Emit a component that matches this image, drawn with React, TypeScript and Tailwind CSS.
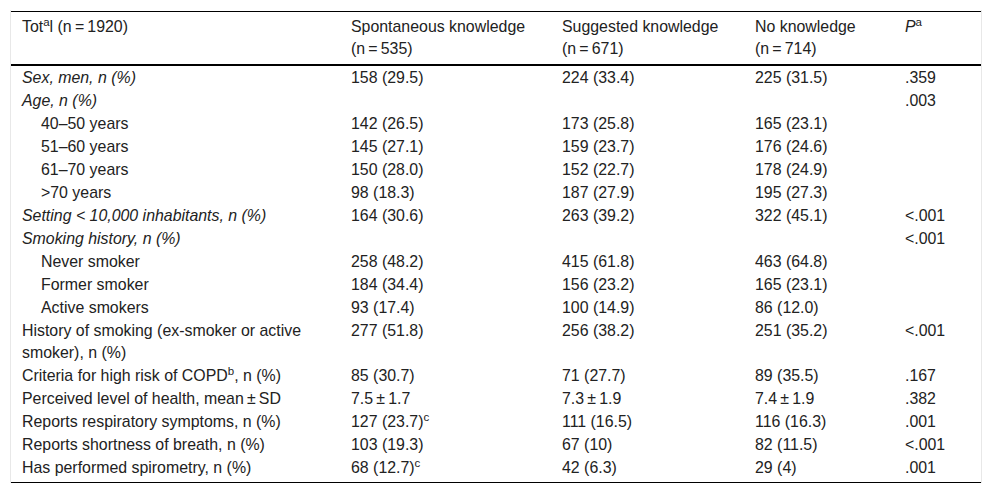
import React from "react";

type Row = {
  label: React.ReactNode;
  values: React.ReactNode[];
  p?: string;
  italic?: boolean;
  indent?: boolean;
};

const sup = (s: string) => (
  <sup className="text-[11.5px] leading-none relative top-[0.5px] align-super">{s}</sup>
);

const T = "\u2009";

const rows: Row[] = [
  { label: "Sex, men, n (%)", italic: true, values: ["158 (29.5)", "224 (33.4)", "225 (31.5)"], p: ".359" },
  { label: "Age, n (%)", italic: true, values: ["", "", ""], p: ".003" },
  { label: "40–50 years", indent: true, values: ["142 (26.5)", "173 (25.8)", "165 (23.1)"] },
  { label: "51–60 years", indent: true, values: ["145 (27.1)", "159 (23.7)", "176 (24.6)"] },
  { label: "61–70 years", indent: true, values: ["150 (28.0)", "152 (22.7)", "178 (24.9)"] },
  { label: ">70 years", indent: true, values: ["98 (18.3)", "187 (27.9)", "195 (27.3)"] },
  { label: "Setting < 10,000 inhabitants, n (%)", italic: true, values: ["164 (30.6)", "263 (39.2)", "322 (45.1)"], p: "<.001" },
  { label: "Smoking history, n (%)", italic: true, values: ["", "", ""], p: "<.001" },
  { label: "Never smoker", indent: true, values: ["258 (48.2)", "415 (61.8)", "463 (64.8)"] },
  { label: "Former smoker", indent: true, values: ["184 (34.4)", "156 (23.2)", "165 (23.1)"] },
  { label: "Active smokers", indent: true, values: ["93 (17.4)", "100 (14.9)", "86 (12.0)"] },
  {
    label: "History of smoking (ex-smoker or active smoker), n (%)",
    values: ["277 (51.8)", "256 (38.2)", "251 (35.2)"],
    p: "<.001",
  },
  {
    label: (
      <>
        Criteria for high risk of COPD{sup("b")}, n (%)
      </>
    ),
    values: ["85 (30.7)", "71 (27.7)", "89 (35.5)"],
    p: ".167",
  },
  {
    label: `Perceived level of health, mean${T}±${T}SD`,
    values: [`7.5${T}±${T}1.7`, `7.3${T}±${T}1.9`, `7.4${T}±${T}1.9`],
    p: ".382",
  },
  {
    label: "Reports respiratory symptoms, n (%)",
    values: [<>127 (23.7){sup("c")}</>, "111 (16.5)", "116 (16.3)"],
    p: ".001",
  },
  { label: "Reports shortness of breath, n (%)", values: ["103 (19.3)", "67 (10)", "82 (11.5)"], p: "<.001" },
  {
    label: "Has performed spirometry, n (%)",
    values: [<>68 (12.7){sup("c")}</>, "42 (6.3)", "29 (4)"],
    p: ".001",
  },
];

const headers = [
  ["Spontaneous knowledge", `(n${T}=${T}535)`],
  ["Suggested knowledge", `(n${T}=${T}671)`],
  ["No knowledge", `(n${T}=${T}714)`],
];

export default function App() {
  return (
    <div className="min-h-[495px] w-[992px] bg-white pt-[10px] pl-[10px] font-['Liberation_Sans',Arial,sans-serif] text-[15.9px] leading-[22px] text-[#222]">
      <div className="w-[972px] border-x border-[#e8e8e8] pt-px">
        <table className="w-[970px] table-fixed border-collapse">
          <colgroup>
            <col className="w-[330px]" />
            <col className="w-[211px]" />
            <col className="w-[193px]" />
            <col className="w-[150px]" />
            <col className="w-[86px]" />
          </colgroup>
          <thead>
            <tr className="border-t border-b-2 border-black">
              <th className="pl-[11px] pr-[10px] pt-[4px] pb-[4px] text-left align-top font-normal">
                Tot{sup("a")}l (n{T}={T}1920)
              </th>
              {headers.map((h, i) => (
                <th key={i} className="pl-[10px] pr-[10px] pt-[4px] pb-[4px] text-left align-top font-normal">
                  {h[0]}
                  <br />
                  {h[1]}
                </th>
              ))}
              <th className="pl-[10px] pt-[4px] pb-[4px] text-left align-top font-normal">
                <i>P</i>
                {sup("a")}
              </th>
            </tr>
          </thead>
          <tbody className="border-b border-black">
            {rows.map((r, i) => {
              const last = i === rows.length - 1;
              const pad = last ? "pt-[0.5px] pb-[3.5px]" : "py-[0.5px]";
              return (
                <tr key={i}>
                  <td
                    className={`${pad} pr-[10px] align-top ${r.indent ? "pl-[30px]" : "pl-[11px]"} ${
                      r.italic ? "italic" : ""
                    }`}
                  >
                    {r.label}
                  </td>
                  {r.values.map((v, j) => (
                    <td key={j} className={`${pad} pl-[10px] pr-[10px] align-top`}>
                      {v}
                    </td>
                  ))}
                  <td className={`${pad} pl-[10px] align-top`}>{r.p ?? ""}</td>
                </tr>
              );
            })}
          </tbody>
        </table>
      </div>
    </div>
  );
}
